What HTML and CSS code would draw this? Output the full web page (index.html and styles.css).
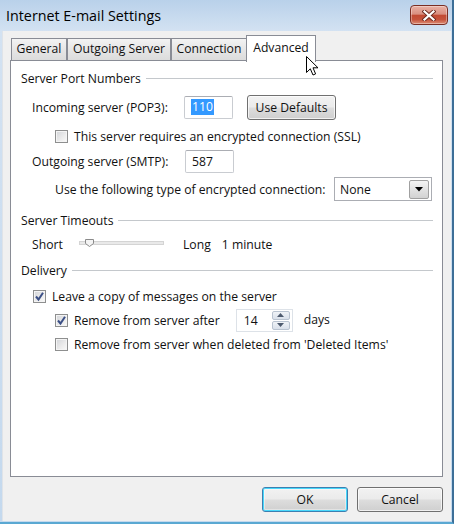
FILE: index.html
```html
<!DOCTYPE html>
<html>
<head>
<meta charset="utf-8">
<link rel="stylesheet" href="styles.css">
</head>
<body>
<div class="window">
  <div class="titlebar">
    <span class="title">Internet E-mail Settings</span>
    <div class="close">
      <svg width="14" height="11" viewBox="0 0 14 11"><path d="M2.5 1.5 L11.5 9.5 M11.5 1.5 L2.5 9.5" stroke="#6b2a20" stroke-width="4" stroke-linecap="square" fill="none"/><path d="M2.5 1.5 L11.5 9.5 M11.5 1.5 L2.5 9.5" stroke="#fff" stroke-width="2.2" stroke-linecap="square" fill="none"/></svg>
    </div>
  </div>
  <div class="client">
    <div class="tabs">
      <div class="tab t-general">General</div>
      <div class="tab t-outgoing">Outgoing Server</div>
      <div class="tab t-connection">Connection</div>
      <div class="tab active t-advanced">Advanced</div>
    </div>
    <div class="panel">
      <div class="heading">Server Port Numbers</div>
      <div class="row ind1 mt5">
        <span class="lbl">Incoming server (POP3):</span>
        <span class="field"><span class="sel">110</span></span>
        <button class="btn usedef">Use Defaults</button>
      </div>
      <div class="row ind2 mt5">
        <span class="cb"></span><span class="cbtext">This server requires an encrypted connection (SSL)</span>
      </div>
      <div class="row ind1 mt1">
        <span class="lbl lbl2">Outgoing server (SMTP):</span>
        <span class="field">587</span>
      </div>
      <div class="row ind2 mt4">
        <span>Use the following type of encrypted connection:</span>
        <span class="combo"><span class="combotext">None</span><span class="drop"><svg width="8" height="5" viewBox="0 0 8 5"><path d="M0 0 H8 L4 4.5 Z" fill="#000"/></svg></span></span>
      </div>
      <div class="heading mt7">Server Timeouts</div>
      <div class="row ind1">
        <span class="short">Short</span>
        <span class="track"><svg class="thumb" width="9" height="8" viewBox="0 0 9 8"><path d="M0.5 0.5 H8.5 V4.5 L4.5 7.5 L0.5 4.5 Z" fill="#f4f4f4" stroke="#8a8a8a"/></svg></span>
        <span class="long">Long</span>
        <span class="minute">1 minute</span>
      </div>
      <div class="heading mt2">Delivery</div>
      <div class="row ind1c mt2">
        <span class="cb"><svg width="11" height="11" viewBox="0 0 11 11"><path d="M2 5.5 L4.5 8.5 L9 1.8" stroke="#3b4f86" stroke-width="2" fill="none"/></svg></span><span class="cbtext">Leave a copy of messages on the server</span>
      </div>
      <div class="row ind2">
        <span class="cb"><svg width="11" height="11" viewBox="0 0 11 11"><path d="M2 5.5 L4.5 8.5 L9 1.8" stroke="#3b4f86" stroke-width="2" fill="none"/></svg></span><span class="cbtext">Remove from server after</span>
        <span class="spin"><span class="spintext">14</span><span class="arrows"><span class="arr"><svg width="7" height="4" viewBox="0 0 7 4"><path d="M0 4 H7 L3.5 0 Z" fill="#4d5a6e"/></svg></span><span class="arr"><svg width="7" height="4" viewBox="0 0 7 4"><path d="M0 0 H7 L3.5 4 Z" fill="#4d5a6e"/></svg></span></span></span>
        <span class="days">days</span>
      </div>
      <div class="row ind2">
        <span class="cb"></span><span class="cbtext">Remove from server when deleted from 'Deleted Items'</span>
      </div>
    </div>
    <div class="buttons">
      <button class="btn default">OK</button>
      <button class="btn">Cancel</button>
    </div>
  </div>
  <svg class="cursor" width="13" height="20" viewBox="0 0 13 20"><path d="M0.5 0.5 L0.5 16.5 L4.3 12.8 L7 19 L9.6 17.9 L7 11.8 L12 11.8 Z" fill="#fff" stroke="#000" stroke-width="1" stroke-linejoin="round"/></svg>
</div>
</body>
</html>
```

FILE: styles.css
```css
* { box-sizing: border-box; }
html, body { margin: 0; padding: 0; }
body {
  font-family: "Open Sans", "Noto Sans", sans-serif;
  font-size: 12.2px;
  color: #111;
  width: 454px;
  height: 524px;
  overflow: hidden;
}
.window {
  position: relative;
  width: 454px;
  height: 524px;
  display: flex;
  flex-direction: column;
  background: linear-gradient(to bottom, #b9d1ea 0px, #d3e2f2 31px, #c4d9ee 100%);
  border-right: 2px solid #3d6f98;
  border-bottom: 2px solid #5aa8d2;
}
.titlebar {
  flex: none;
  height: 31px;
  display: flex;
  align-items: flex-start;
  justify-content: space-between;
  padding: 0 4px 0 6px;
}
.title {
  font-size: 14.3px;
  line-height: 31px;
  color: #000;
}
.close {
  margin-top: 5px;
  width: 38px;
  height: 20px;
  border: 1px solid #7a2e24;
  border-radius: 4px;
  background: linear-gradient(to bottom, #eab1a5 0%, #d98f80 45%, #c24a33 52%, #c5533c 75%, #dd8d75 100%);
  box-shadow: inset 0 0 0 1px rgba(255,255,255,0.35);
  display: flex;
  align-items: center;
  justify-content: center;
}
.client {
  flex: 1;
  margin: 0 1px 1px 2px;
  background: #f0f0f0;
  display: flex;
  flex-direction: column;
  padding: 4px 8px 0 7px;
  border-left: 1px solid #dfe3e8;
}
.tabs {
  display: flex;
  align-items: flex-start;
  height: 27px;
  margin: 0 0 -2px 1px;
  position: relative;
  z-index: 2;
}
.tab {
  margin-top: 3px;
  height: 22px;
  line-height: 20px;
  text-align: center;
  border: 1px solid #898c95;
  border-bottom: none;
  background: linear-gradient(to bottom, #f3f3f3, #e6e6e6 50%, #dcdcdc);
  white-space: nowrap;
}
.t-general { width: 56px; }
.t-outgoing { width: 104px; }
.t-connection { width: 76px; }
.t-advanced { width: 70px; }
.tab.active {
  margin-top: 0;
  margin-left: -1px;
  height: 27px;
  line-height: 24px;
  background: #fff;
}
.panel {
  flex: 1;
  background: #fff;
  border: 1px solid #898c95;
  padding: 5px 9px 0 10px;
  display: flex;
  flex-direction: column;
}
.heading {
  display: flex;
  align-items: center;
  height: 24px;
  gap: 5px;
}
.heading::after {
  content: "";
  flex: 1;
  height: 1px;
  background: #c4c8cc;
}
.row {
  display: flex;
  align-items: center;
  height: 24px;
  white-space: nowrap;
}
.ind1 { padding-left: 11px; }
.ind1c { padding-left: 12px; }
.ind2 { padding-left: 34px; }
.mt1 { margin-top: 1px; }
.mt2 { margin-top: 2px; }
.mt4 { margin-top: 4px; }
.mt5 { margin-top: 5px; }
.mt7 { margin-top: 7px; }
.lbl { width: 152px; }
.lbl2 { width: 153px; }
.field {
  width: 49px;
  height: 23px;
  border: 1px solid #c9ccd1;
  border-top-color: #abadb3;
  border-radius: 2px;
  background: #fff;
  padding-left: 6px;
  display: flex;
  align-items: center;
}
.sel {
  background: #3399ff;
  color: #fff;
  padding: 0 1px;
  line-height: 16px;
}
.btn {
  font-family: inherit;
  font-size: 12.2px;
  color: #111;
  height: 25px;
  border: 1px solid #707070;
  border-radius: 3px;
  background: linear-gradient(to bottom, #f2f2f2 0%, #ebebeb 48%, #dddddd 52%, #cfcfcf 100%);
  box-shadow: inset 0 0 0 1px rgba(255,255,255,0.7);
  padding: 0;
}
.usedef {
  margin-left: 14px;
  width: 89px;
}
.cb {
  width: 13px;
  height: 13px;
  border: 1px solid #8e8f8f;
  background: linear-gradient(135deg, #d2d4d8 0%, #ececec 60%, #fafafa 100%);
  box-shadow: inset 0 0 0 1px #f4f4f4;
  display: flex;
  align-items: center;
  justify-content: center;
  flex: none;
}
.cbtext { margin-left: 6px; }
.combo {
  margin-left: auto;
  margin-right: 1px;
  width: 98px;
  height: 24px;
  border: 1px solid #abadb3;
  background: #fff;
  display: flex;
  align-items: center;
  padding: 0 2px 0 5px;
}
.combotext { flex: 1; }
.drop {
  width: 20px;
  height: 19px;
  border: 1px solid #a0a0a0;
  border-radius: 2px;
  background: linear-gradient(to bottom, #f4f4f4, #e2e2e2 50%, #d2d2d2);
  display: flex;
  align-items: center;
  justify-content: center;
}
.short { width: 47px; }
.track {
  position: relative;
  width: 85px;
  height: 4px;
  border: 1px solid #d4d4d4;
  background: #e9e9e9;
  margin-top: -2px;
}
.thumb {
  position: absolute;
  left: 5px;
  top: -3px;
}
.long { margin-left: 19px; }
.minute { margin-left: 11px; }
.spin {
  margin-left: 16px;
  width: 57px;
  height: 23px;
  border: 1px solid #dde2e8;
  background: #fff;
  display: flex;
  align-items: center;
  padding: 1px 2px 1px 7px;
}
.spintext { flex: 1; }
.arrows {
  width: 18px;
  height: 19px;
  display: flex;
  flex-direction: column;
  gap: 1px;
}
.arr {
  flex: 1;
  border: 1px solid #b9c3d0;
  border-radius: 2px;
  background: linear-gradient(to bottom, #f0f3f7, #d9e0ea);
  display: flex;
  align-items: center;
  justify-content: center;
}
.days { margin-left: 11px; margin-top: -2px; }
.buttons {
  flex: none;
  height: 44px;
  display: flex;
  justify-content: flex-end;
  align-items: flex-start;
  padding-top: 10px;
  gap: 9px;
}
.buttons .btn { width: 86px; }
.btn.default {
  border-color: #3c7fb1;
  box-shadow: inset 0 0 0 1px #48d8fb, inset 0 0 0 2px rgba(255,255,255,0.4);
  background: linear-gradient(to bottom, #f2f2f2 0%, #ebebeb 48%, #dddddd 52%, #cfcfcf 100%);
}
.cursor {
  position: absolute;
  left: 306px;
  top: 56px;
  z-index: 5;
}
```
